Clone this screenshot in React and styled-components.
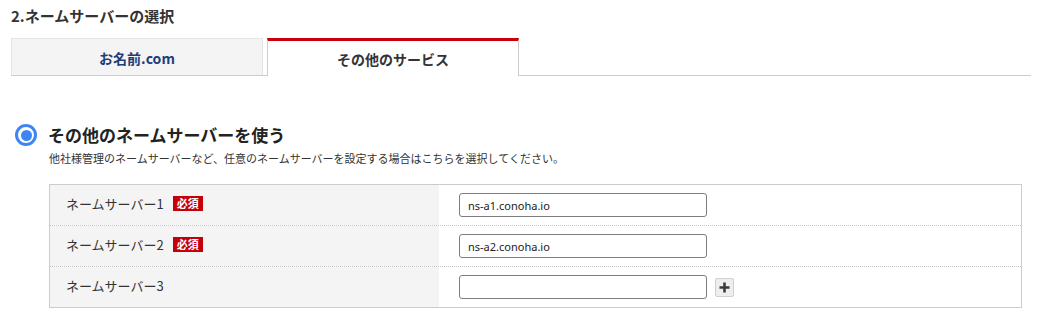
import React from "react";
import styled, { createGlobalStyle } from "styled-components";

const GlobalStyle = createGlobalStyle`
  body {
    margin: 0;
    background: #fff;
    color: #333;
    font-family: "Noto Sans CJK JP", "Noto Sans", sans-serif;
  }
`;

const Page = styled.div`
  padding: 6px 8px 0 11px;
`;

const Title = styled.h2`
  margin: 0;
  font-size: 15px;
  line-height: 20px;
  font-weight: 700;
  color: #333;
`;

const TabBar = styled.div`
  margin-top: 12px;
  width: 1020px;
  display: flex;
  align-items: flex-end;
  border-bottom: 1px solid #ccc;
`;

const Tab = styled.div`
  box-sizing: border-box;
  width: 252px;
  display: flex;
  align-items: center;
  justify-content: center;
  font-size: 14px;
  font-weight: 700;
  ${(p) =>
    p.$active
      ? `
    height: 38px;
    margin-bottom: -1px;
    background: #fff;
    color: #333;
    border-top: 3px solid #c8000b;
    border-left: 1px solid #ccc;
    border-right: 1px solid #ccc;
    padding-top: 1px;
  `
      : `
    height: 37px;
    margin-right: 4px;
    background: #f4f4f4;
    color: #1f3d78;
    border: 1px solid #e4e4e4;
    border-bottom: none;
    padding-top: 2px;
  `}
`;

const OptionRow = styled.label`
  margin-top: 47px;
  display: flex;
  align-items: center;
  gap: 11px;
  padding-left: 4px;
`;

const Radio = styled.span`
  box-sizing: border-box;
  width: 22px;
  height: 22px;
  border-radius: 50%;
  border: 3px solid #3e85f4;
  display: flex;
  align-items: center;
  justify-content: center;
  &::after {
    content: "";
    width: 11px;
    height: 11px;
    border-radius: 50%;
    background: #3e85f4;
  }
`;

const OptionTitle = styled.span`
  font-size: 17px;
  line-height: 24px;
  font-weight: 700;
  color: #222;
`;

const Description = styled.p`
  margin: 3px 0 0 38px;
  font-size: 11px;
  line-height: 16px;
  color: #333;
`;

const Table = styled.div`
  margin: 18px 0 0 38px;
  width: 973px;
  box-sizing: border-box;
  border: 1px solid #ccc;
`;

const Row = styled.div`
  display: flex;
  height: 40px;
  & + & {
    border-top: 1px dotted #c4c4c4;
  }
`;

const LabelCell = styled.div`
  width: 389px;
  background: #f4f4f4;
  display: flex;
  align-items: center;
  padding-left: 16px;
  box-sizing: border-box;
  font-size: 13px;
  color: #333;
  padding-bottom: 3px;
`;

const Badge = styled.span`
  margin-left: 9px;
  background: #c4000b;
  color: #fff;
  font-size: 11px;
  line-height: 15px;
  padding: 0 4px;
  font-weight: 700;
`;

const InputCell = styled.div`
  flex: 1;
  display: flex;
  align-items: center;
  padding-left: 20px;
`;

const TextInput = styled.input`
  box-sizing: border-box;
  width: 248px;
  height: 24px;
  border: 1px solid #7d7d7d;
  border-radius: 3px;
  padding: 0 8px;
  font-size: 11px;
  font-family: "Noto Sans", sans-serif;
  color: #222;
  outline: none;
`;

const AddButton = styled.button`
  box-sizing: border-box;
  margin-left: 8px;
  width: 19px;
  height: 19px;
  padding: 0;
  border: 1px solid #d0d0d0;
  border-radius: 2px;
  background: #eee;
  display: flex;
  align-items: center;
  justify-content: center;
`;

const rows = [
  { label: "ネームサーバー1", required: true, value: "ns-a1.conoha.io" },
  { label: "ネームサーバー2", required: true, value: "ns-a2.conoha.io" },
  { label: "ネームサーバー3", required: false, value: "", add: true },
];

export default function App() {
  return (
    <>
      <GlobalStyle />
      <Page>
        <Title>2.ネームサーバーの選択</Title>
        <TabBar>
          <Tab>お名前.com</Tab>
          <Tab $active>その他のサービス</Tab>
        </TabBar>
        <OptionRow>
          <Radio />
          <OptionTitle>その他のネームサーバーを使う</OptionTitle>
        </OptionRow>
        <Description>
          他社様管理のネームサーバーなど、任意のネームサーバーを設定する場合はこちらを選択してください。
        </Description>
        <Table>
          {rows.map((r) => (
            <Row key={r.label}>
              <LabelCell>
                {r.label}
                {r.required && <Badge>必須</Badge>}
              </LabelCell>
              <InputCell>
                <TextInput defaultValue={r.value} />
                {r.add && (
                  <AddButton aria-label="追加">
                    <svg width="13" height="13" viewBox="0 0 13 13">
                      <path d="M6.5 1.5v10M1.5 6.5h10" stroke="#3a3a3a" strokeWidth="2.6" />
                    </svg>
                  </AddButton>
                )}
              </InputCell>
            </Row>
          ))}
        </Table>
      </Page>
    </>
  );
}
